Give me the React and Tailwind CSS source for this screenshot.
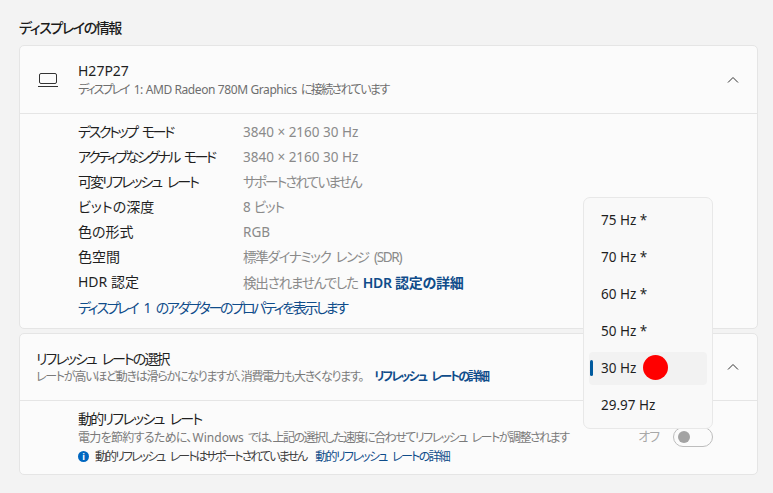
import React from "react";

const FONT = "font-['Noto_Sans','Noto_Sans_CJK_JP',sans-serif] [font-feature-settings:'palt']";

const rows = [
  ["デスクトップ モード", "tracking-[-2.4px] [word-spacing:4px]", "3840 × 2160 30 Hz", ""],
  ["アクティブなシグナル モード", "tracking-[-2.5px] [word-spacing:4px]", "3840 × 2160 30 Hz", ""],
  ["可変リフレッシュ レート", "tracking-[-2px] [word-spacing:4px]", "サポートされていません", "tracking-[-1.8px]"],
  ["ビットの深度", "", "8 ビット", "tracking-[-1.2px] [word-spacing:2px]"],
  ["色の形式", "", "RGB", ""],
  ["色空間", "", "標準ダイナミック レンジ (SDR)", "tracking-[-1.3px] [word-spacing:3px]"],
];

const rates = ["75 Hz *", "70 Hz *", "60 Hz *", "50 Hz *", "30 Hz", "29.97 Hz"];

const Chevron = () => (
  <svg width="12" height="8" viewBox="0 0 12 8" fill="none" stroke="#333" strokeWidth="1" className="shrink-0">
    <path d="M1 6.5 6 1.5 11 6.5" />
  </svg>
);

const Row = ({ label, labelClass, children }) => (
  <div className="flex h-[25px] items-center whitespace-nowrap">
    <div className={`w-[165px] pb-[2px] text-[14px] text-[#1f1f1f] ${labelClass}`}>{label}</div>
    <div className="text-[13.5px] text-[#8a8a8a]">{children}</div>
  </div>
);

export default function App() {
  return (
    <div className={`relative h-[493px] w-[773px] overflow-hidden bg-[#f3f3f3] pl-[19px] pr-[15px] ${FONT}`}>
      <div className="flex h-[45px] items-start pt-[18px] text-[14px] leading-[20px] font-medium tracking-[-1.4px] text-[#1b1b1b]">ディスプレイの情報</div>

      {/* display card */}
      <div className="h-[284px] rounded-[5px] border border-[#e5e5e5] bg-[#fbfbfb]">
        <div className="flex h-[68px] items-center border-b border-[#e5e5e5] pr-[18px] pl-[18px]">
          <svg width="20" height="16" viewBox="0 0 20 16" fill="none" stroke="#333" strokeWidth="1" className="mr-[20px] shrink-0">
            <rect x="1.5" y="1.5" width="17" height="10" rx="1.5" />
            <path d="M0 14.5h20" />
          </svg>
          <div className="flex-1 whitespace-nowrap">
            <div className="text-[14px] leading-[18px] text-[#1f1f1f]">H27P27</div>
            <div className="pt-[2px] text-[12px] leading-[15px] text-[#6e6e6e]">
              <span className="mr-[5px] tracking-[-2px]">ディスプレイ</span>
              <span className="mr-[4px] tracking-[-0.4px]">1: AMD Radeon 780M Graphics</span>
              <span className="tracking-[-1.6px]">に接続されています</span>
            </div>
          </div>
          <Chevron />
        </div>
        <div className="pt-[6px] pl-[58px]">
          {rows.map(([label, labelClass, value, valueClass]) => (
            <Row key={label} label={label} labelClass={labelClass}>
              <span className={valueClass}>{value}</span>
            </Row>
          ))}
          <Row label="HDR 認定" labelClass="">
            <span className="mr-[5px] tracking-[-1.15px]">検出されませんでした</span>
            <span className="text-[14px] font-semibold tracking-[-0.3px] text-[#0f4c8a]">HDR 認定の詳細</span>
          </Row>
          <div className="flex h-[25px] items-center text-[14px] tracking-[-2.3px] [word-spacing:5px] whitespace-nowrap text-[#0f4c8a]">ディスプレイ 1 のアダプターのプロパティを表示します</div>
        </div>
      </div>

      {/* refresh rate card */}
      <div className="mt-[4px] h-[142px] rounded-[5px] border border-[#e5e5e5] bg-[#fbfbfb]">
        <div className="flex h-[67px] items-center border-b border-[#e5e5e5] pr-[18px] pl-[16px]">
          <div className="flex-1 whitespace-nowrap">
            <div className="text-[14px] leading-[18px] tracking-[-1.9px] [word-spacing:4px] text-[#1f1f1f]">リフレッシュ レートの選択</div>
            <div className="pt-[1px] text-[12px] leading-[15px] text-[#7a7a7a]">
              <span className="tracking-[-1.25px]">レートが高いほど動きは滑らかになりますが、消費電力も大きくなります。</span>
              <span className="ml-[11px] font-semibold tracking-[-1.95px] [word-spacing:4px] text-[#0f4c8a]">リフレッシュ レートの詳細</span>
            </div>
          </div>
          <Chevron />
        </div>
        <div className="flex items-start pt-[9px] pr-[44px] pl-[58px]">
          <div className="flex-1 whitespace-nowrap">
            <div className="text-[14px] leading-[18px] tracking-[-1.7px] [word-spacing:4px] text-[#1f1f1f]">動的リフレッシュ レート</div>
            <div className="pt-[1px] text-[12px] leading-[18px] text-[#7a7a7a]">
              <span className="mr-[1px] tracking-[-0.7px]">電力を節約するために、</span>
              <span className="mr-[4px]">Windows</span>
              <span className="tracking-[-1.5px] [word-spacing:3px]">では、上記の選択した速度に合わせてリフレッシュ レートが調整されます</span>
            </div>
            <div className="flex h-[19px] items-center text-[12px] text-[#3d3d3d]">
              <span className="mr-[6px] flex h-[11px] w-[11px] items-center justify-center rounded-full bg-[#0067c0] text-[9px] leading-none font-bold text-white">i</span>
              <span className="tracking-[-1.95px] [word-spacing:4px]">動的リフレッシュ レートはサポートされていません</span>
              <span className="ml-[9px] tracking-[-1.7px] [word-spacing:4px] text-[#0f4c8a]">動的リフレッシュ レートの詳細</span>
            </div>
          </div>
          <div className="flex items-center pt-[17px]">
            <span className="mr-[14px] text-[13px] tracking-[-1px] text-[#a8a8a8]">オフ</span>
            <div className="flex h-[20px] w-[40px] items-center rounded-full border border-[#bdbdbd] bg-[#fbfbfb] pl-[4px]">
              <div className="h-[12px] w-[12px] rounded-full bg-[#a3a3a3]" />
            </div>
          </div>
        </div>
      </div>

      {/* refresh rate flyout */}
      <div className="absolute top-[197px] left-[583px] flex h-[232px] w-[130px] flex-col rounded-[7px] border border-[#e8e8e8] bg-[#f9f9f9] px-[5px] pt-[4px]">
        {rates.map((rate) => (
          <div key={rate} className="flex h-[37px] shrink-0 items-center">
            <div className={`relative flex h-[33px] w-full items-center rounded-[4px] pl-[12px] text-[13.5px] text-[#1f1f1f] ${rate === "30 Hz" ? "bg-[#f2f2f2]" : ""}`}>
              {rate === "30 Hz" && <span className="absolute top-[8px] left-[1px] h-[16px] w-[3px] rounded-full bg-[#005a9e]" />}
              {rate}
            </div>
          </div>
        ))}
      </div>

      {/* pointer marker */}
      <div className="absolute top-[355px] left-[643px] h-[25px] w-[25px] rounded-full bg-[#ff0000]" />
    </div>
  );
}
